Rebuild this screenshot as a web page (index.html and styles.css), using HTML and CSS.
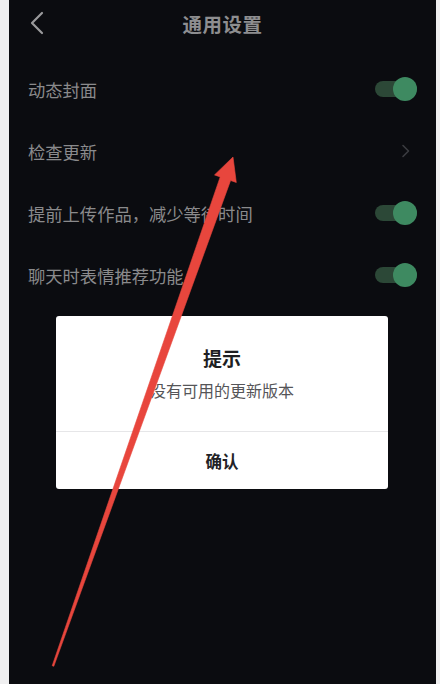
FILE: index.html
```html
<!DOCTYPE html>
<html lang="zh">
<head>
<meta charset="utf-8">
<link rel="stylesheet" href="styles.css">
</head>
<body>
<div class="frame">
  <div class="screen">
    <header class="topbar">
      <svg class="back" width="14" height="24" viewBox="0 0 14 24"><path d="M12 2 L2 12 L12 22" fill="none" stroke="#9a9a9c" stroke-width="2.2" stroke-linecap="round" stroke-linejoin="round"/></svg>
      <h1 class="title">通用设置</h1>
    </header>
    <ul class="list">
      <li class="row"><span class="label">动态封面</span><span class="toggle"><span class="knob"></span></span></li>
      <li class="row"><span class="label">检查更新</span><svg class="chev" width="10" height="14" viewBox="0 0 10 14"><path d="M2 1.5 L7.5 7 L2 12.5" fill="none" stroke="#3b3c40" stroke-width="1.6" stroke-linecap="round" stroke-linejoin="round"/></svg></li>
      <li class="row"><span class="label">提前上传作品，减少等待时间</span><span class="toggle"><span class="knob"></span></span></li>
      <li class="row"><span class="label">聊天时表情推荐功能</span><span class="toggle"><span class="knob"></span></span></li>
    </ul>
  </div>
  <div class="dialog">
    <div class="dialog-body">
      <div class="dialog-title">提示</div>
      <div class="dialog-msg">没有可用的更新版本</div>
    </div>
    <div class="dialog-btn">确认</div>
  </div>
  <svg class="arrow" width="440" height="684" viewBox="0 0 440 684">
    <polygon points="52.2,665.7 220.2,176.9 214.5,174.9 233,157 236.3,182.5 230.6,180.5 53.8,666.3" fill="#e8463d" stroke="#e8463d" stroke-width="0.6" stroke-linejoin="round"/>
  </svg>
</div>
</body>
</html>
```
FILE: styles.css
```css
* { box-sizing: border-box; }
html, body { margin: 0; padding: 0; }
body {
  background: #efeff0;
  font-family: "Noto Sans CJK SC", "Noto Sans", sans-serif;
}
.frame {
  position: relative;
  width: 440px;
  height: 684px;
  overflow: hidden;
}
.screen {
  margin-left: 9px;
  width: 427px;
  height: 684px;
  background: #0b0c10;
}
.topbar {
  height: 46px;
  display: flex;
  align-items: center;
  justify-content: center;
  position: relative;
}
.back {
  position: absolute;
  left: 21px;
  top: 11px;
}
.title {
  margin: 0;
  font-size: 19.5px;
  font-weight: 700;
  color: #8e8e90;
  letter-spacing: 0.5px;
}
.list {
  list-style: none;
  margin: 12px 0 0 0;
  padding: 0;
}
.row {
  height: 62px;
  display: flex;
  align-items: center;
  justify-content: space-between;
  padding: 0 19px 0 19px;
}
.label {
  font-size: 17.3px;
  color: #8a8a8c;
}
.toggle {
  position: relative;
  width: 42px;
  height: 16px;
  border-radius: 8px;
  background: #2c4837;
}
.knob {
  position: absolute;
  right: 0;
  top: -4px;
  width: 24px;
  height: 24px;
  border-radius: 50%;
  background: #3e8a61;
}
.chev {
  margin-right: 6px;
}
.dialog {
  position: absolute;
  left: 56px;
  top: 316px;
  width: 332px;
  height: 173px;
  background: #ffffff;
  border-radius: 3px;
  display: flex;
  flex-direction: column;
}
.dialog-body {
  height: 116px;
  border-bottom: 1px solid #e6e6e8;
  display: flex;
  flex-direction: column;
  align-items: center;
  padding-top: 28px;
}
.dialog-title {
  font-size: 19px;
  font-weight: 700;
  color: #1e1e22;
  line-height: 28px;
}
.dialog-msg {
  margin-top: 7px;
  font-size: 16px;
  color: #555558;
  line-height: 22px;
}
.dialog-btn {
  flex: 1;
  display: flex;
  align-items: center;
  justify-content: center;
  font-size: 16.5px;
  font-weight: 700;
  color: #222226;
}
.arrow {
  position: absolute;
  left: 0;
  top: 0;
  pointer-events: none;
}
```
